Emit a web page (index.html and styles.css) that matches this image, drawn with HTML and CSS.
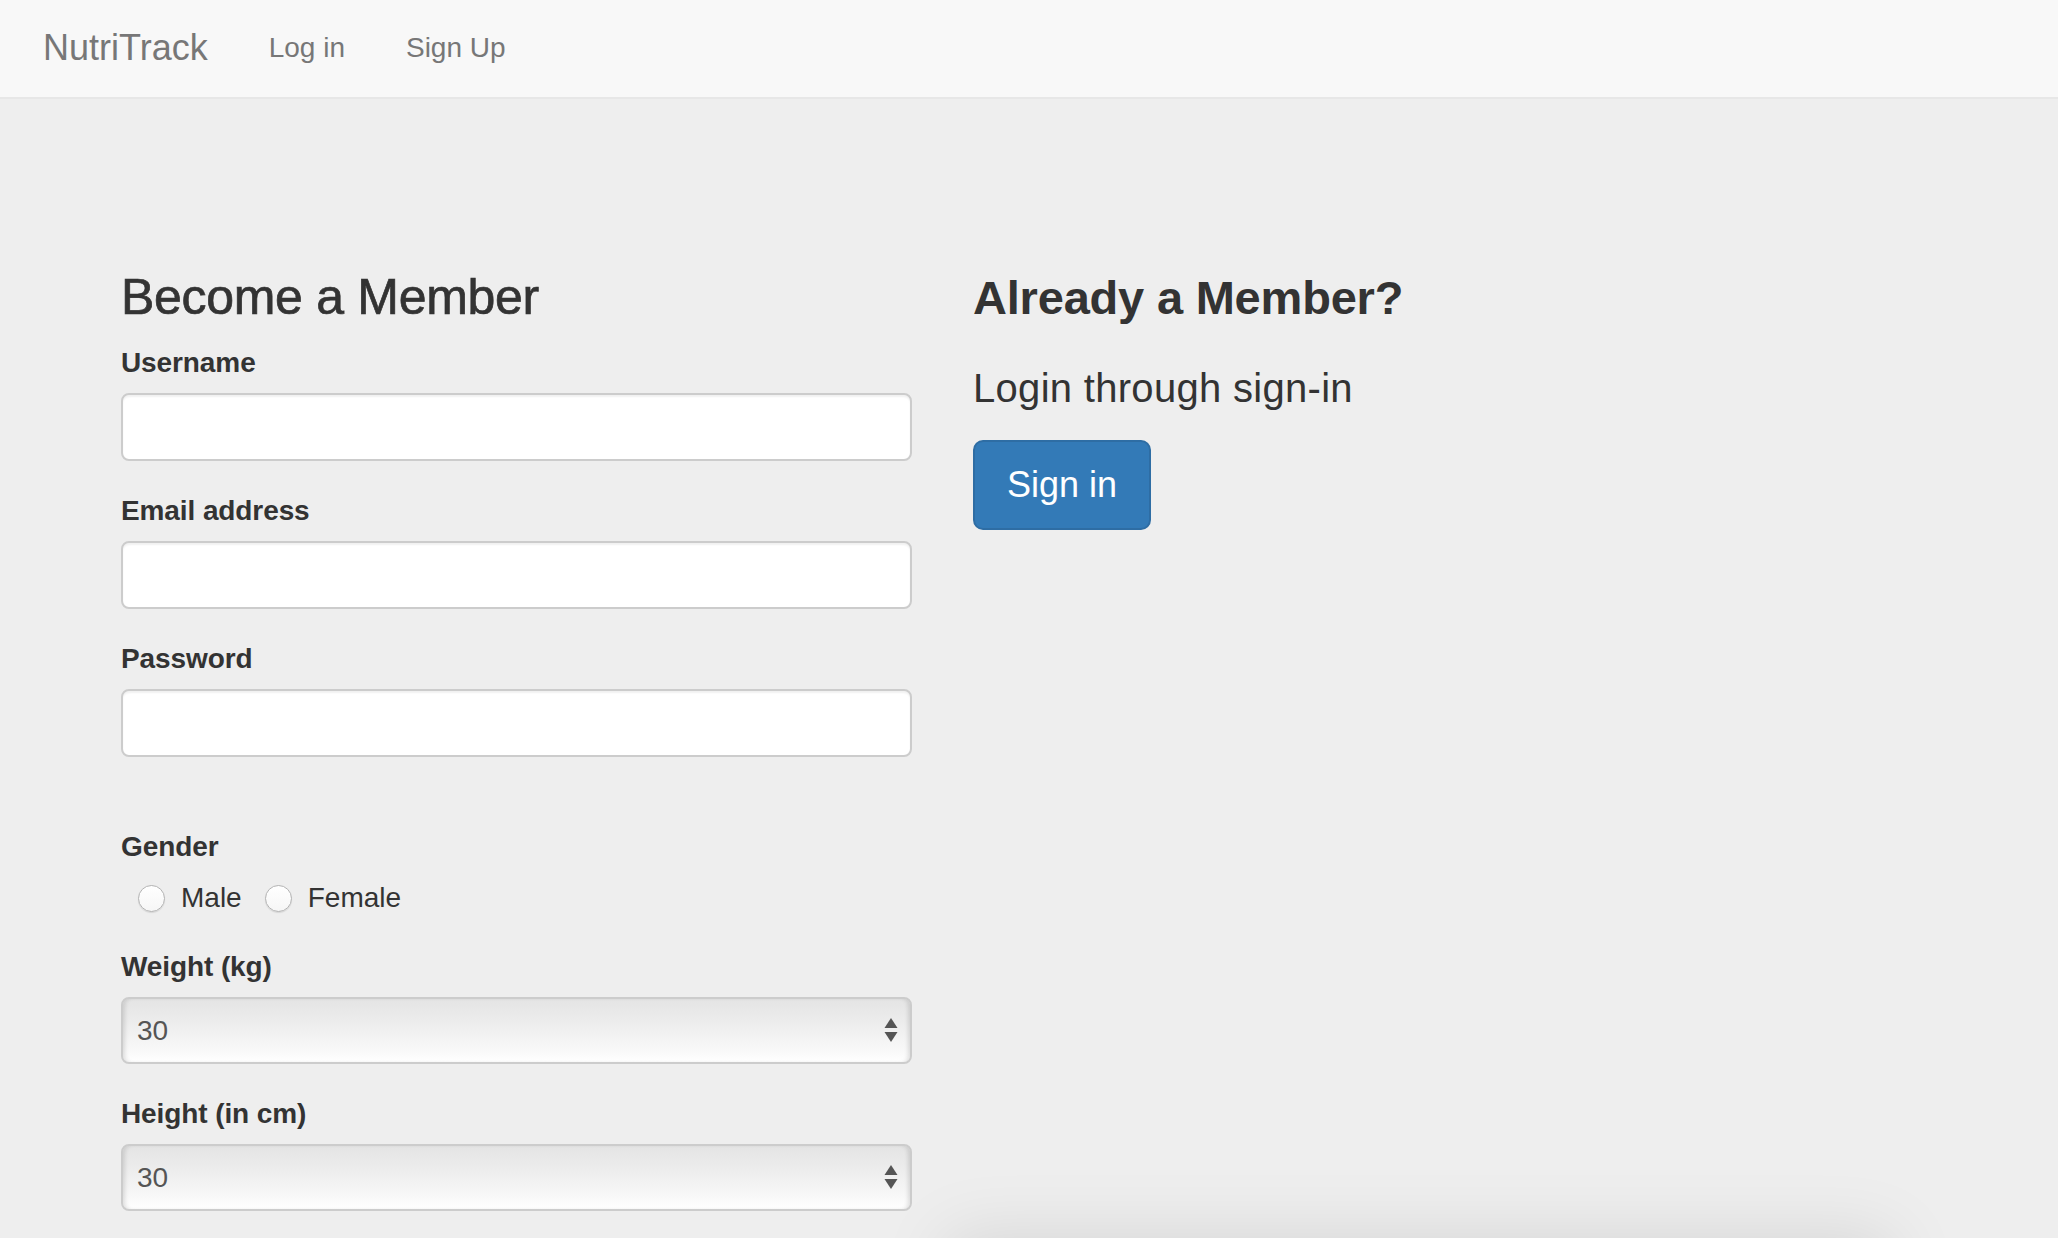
FILE: index.html
```html
<!DOCTYPE html>
<html lang="en">
<head>
<meta charset="utf-8">
<title>NutriTrack</title>
<link rel="stylesheet" href="styles.css">
</head>
<body>
<nav class="navbar">
  <a class="brand" href="#">NutriTrack</a>
  <a class="nav-link" href="#">Log in</a>
  <a class="nav-link" href="#">Sign Up</a>
</nav>
<main class="main">
  <section class="col-left">
    <h3 class="title">Become a Member</h3>
    <div class="form-group">
      <label class="label">Username</label>
      <input class="input" type="text">
    </div>
    <div class="form-group">
      <label class="label">Email address</label>
      <input class="input" type="email">
    </div>
    <div class="form-group">
      <label class="label">Password</label>
      <input class="input" type="password">
    </div>
    <div class="form-group gender-group">
      <label class="label">Gender</label>
      <div class="radios">
        <label class="radio"><input type="radio" name="g" class="radio-input"><span>Male</span></label>
        <label class="radio"><input type="radio" name="g" class="radio-input"><span>Female</span></label>
      </div>
    </div>
    <div class="form-group">
      <label class="label">Weight (kg)</label>
      <div class="select-wrap">
        <select class="select"><option>30</option></select>
        <svg class="arrows" width="14" height="26" viewBox="0 0 14 26"><path d="M7 0 L13.5 10 L0.5 10 Z" fill="#555"/><path d="M0.5 14 L13.5 14 L7 24 Z" fill="#555"/></svg>
      </div>
    </div>
    <div class="form-group">
      <label class="label">Height (in cm)</label>
      <div class="select-wrap">
        <select class="select"><option>30</option></select>
        <svg class="arrows" width="14" height="26" viewBox="0 0 14 26"><path d="M7 0 L13.5 10 L0.5 10 Z" fill="#555"/><path d="M0.5 14 L13.5 14 L7 24 Z" fill="#555"/></svg>
      </div>
    </div>
  </section>
  <section class="col-right">
    <h3 class="title title-bold">Already a Member?</h3>
    <p class="lead">Login through sign-in</p>
    <button class="btn">Sign in</button>
  </section>
</main>
<div class="bottom-shadow"></div>
</body>
</html>
```

FILE: styles.css
```css
html, body {
  margin: 0;
  padding: 0;
  background: #eeeeee;
  font-family: "Liberation Sans", Arial, sans-serif;
  color: #333333;
  font-size: 28px;
  line-height: 40px;
  overflow: hidden;
}

.navbar {
  box-sizing: border-box;
  height: 99px;
  background: #f8f8f8;
  border-bottom: 2px solid #e7e7e7;
  display: flex;
  align-items: center;
  padding-left: 43px;
  padding-bottom: 2px;
}

.brand {
  font-size: 36px;
  color: #777777;
  text-decoration: none;
  margin-right: 61px;
  line-height: 40px;
}

.nav-link {
  font-size: 28px;
  color: #777777;
  text-decoration: none;
  margin-right: 61px;
  line-height: 40px;
}

.main {
  display: flex;
  align-items: flex-start;
  padding-left: 121px;
  padding-top: 171px;
}

.col-left {
  width: 791px;
  flex: none;
}

.col-right {
  margin-left: 61px;
  flex: none;
}

.title {
  margin: 0 0 18px 0;
  font-size: 50px;
  line-height: 55px;
  font-weight: normal;
  color: #333333;
  letter-spacing: -0.3px;
  -webkit-text-stroke: 0.7px #333333;
}

.title-bold {
  font-size: 47px;
  font-weight: bold;
  letter-spacing: -0.2px;
  -webkit-text-stroke: 0;
}

.form-group {
  margin-bottom: 30px;
}

.label {
  display: block;
  font-weight: bold;
  font-size: 28px;
  line-height: 40px;
  margin-bottom: 10px;
  letter-spacing: -0.1px;
}

.input {
  display: block;
  box-sizing: border-box;
  width: 100%;
  height: 68px;
  border: 2px solid #cccccc;
  border-radius: 8px;
  background: #ffffff;
  box-shadow: inset 0 2px 2px rgba(0, 0, 0, 0.06);
  font-size: 28px;
  padding: 0 24px;
  margin: 0;
}

.gender-group {
  margin-top: 70px;
  margin-bottom: 29px;
}

.gender-group .label {
  margin-bottom: 11px;
}

.radios {
  display: flex;
  align-items: center;
  height: 40px;
  padding-left: 17px;
}

.radio {
  display: flex;
  align-items: center;
  margin-right: 23px;
  font-size: 28px;
  line-height: 40px;
  color: #333333;
}

.radio-input {
  appearance: none;
  -webkit-appearance: none;
  width: 27px;
  height: 27px;
  margin: 0 16px 0 0;
  border: 1px solid #b3b3b3;
  border-radius: 50%;
  background: linear-gradient(#ffffff, #f6f6f6);
  box-shadow: 0 1px 1px rgba(0, 0, 0, 0.1);
  flex: none;
}

.select-wrap {
  position: relative;
  height: 67px;
}

.select {
  appearance: none;
  -webkit-appearance: none;
  display: block;
  box-sizing: border-box;
  width: 100%;
  height: 67px;
  border: 2px solid #cccccc;
  border-radius: 8px;
  background: linear-gradient(#e4e4e4 0%, #ececec 35%, #f8f8f8 80%, #ffffff 100%);
  box-shadow: inset 4px 0 4px -2px rgba(0, 0, 0, 0.12), inset -4px 0 4px -2px rgba(0, 0, 0, 0.12);
  font-family: "Liberation Sans", Arial, sans-serif;
  font-size: 28px;
  color: #555555;
  padding: 0 14px;
  margin: 0;
}

.arrows {
  position: absolute;
  right: 14px;
  top: 21px;
}

.lead {
  margin: 35px 0 24px 0;
  font-size: 40px;
  line-height: 56px;
  font-weight: 300;
  color: #333333;
  letter-spacing: 0.3px;
}

.btn {
  display: block;
  box-sizing: border-box;
  width: 178px;
  height: 90px;
  background: #337ab7;
  border: 2px solid #2e6da4;
  border-radius: 10px;
  color: #ffffff;
  font-family: "Liberation Sans", Arial, sans-serif;
  font-size: 36px;
  padding: 0;
  margin: 0;
}

.bottom-shadow {
  position: fixed;
  left: 960px;
  top: 1250px;
  width: 920px;
  height: 120px;
  background: #eeeeee;
  box-shadow: 0 0 70px 14px rgba(0, 0, 0, 0.1);
}
```
